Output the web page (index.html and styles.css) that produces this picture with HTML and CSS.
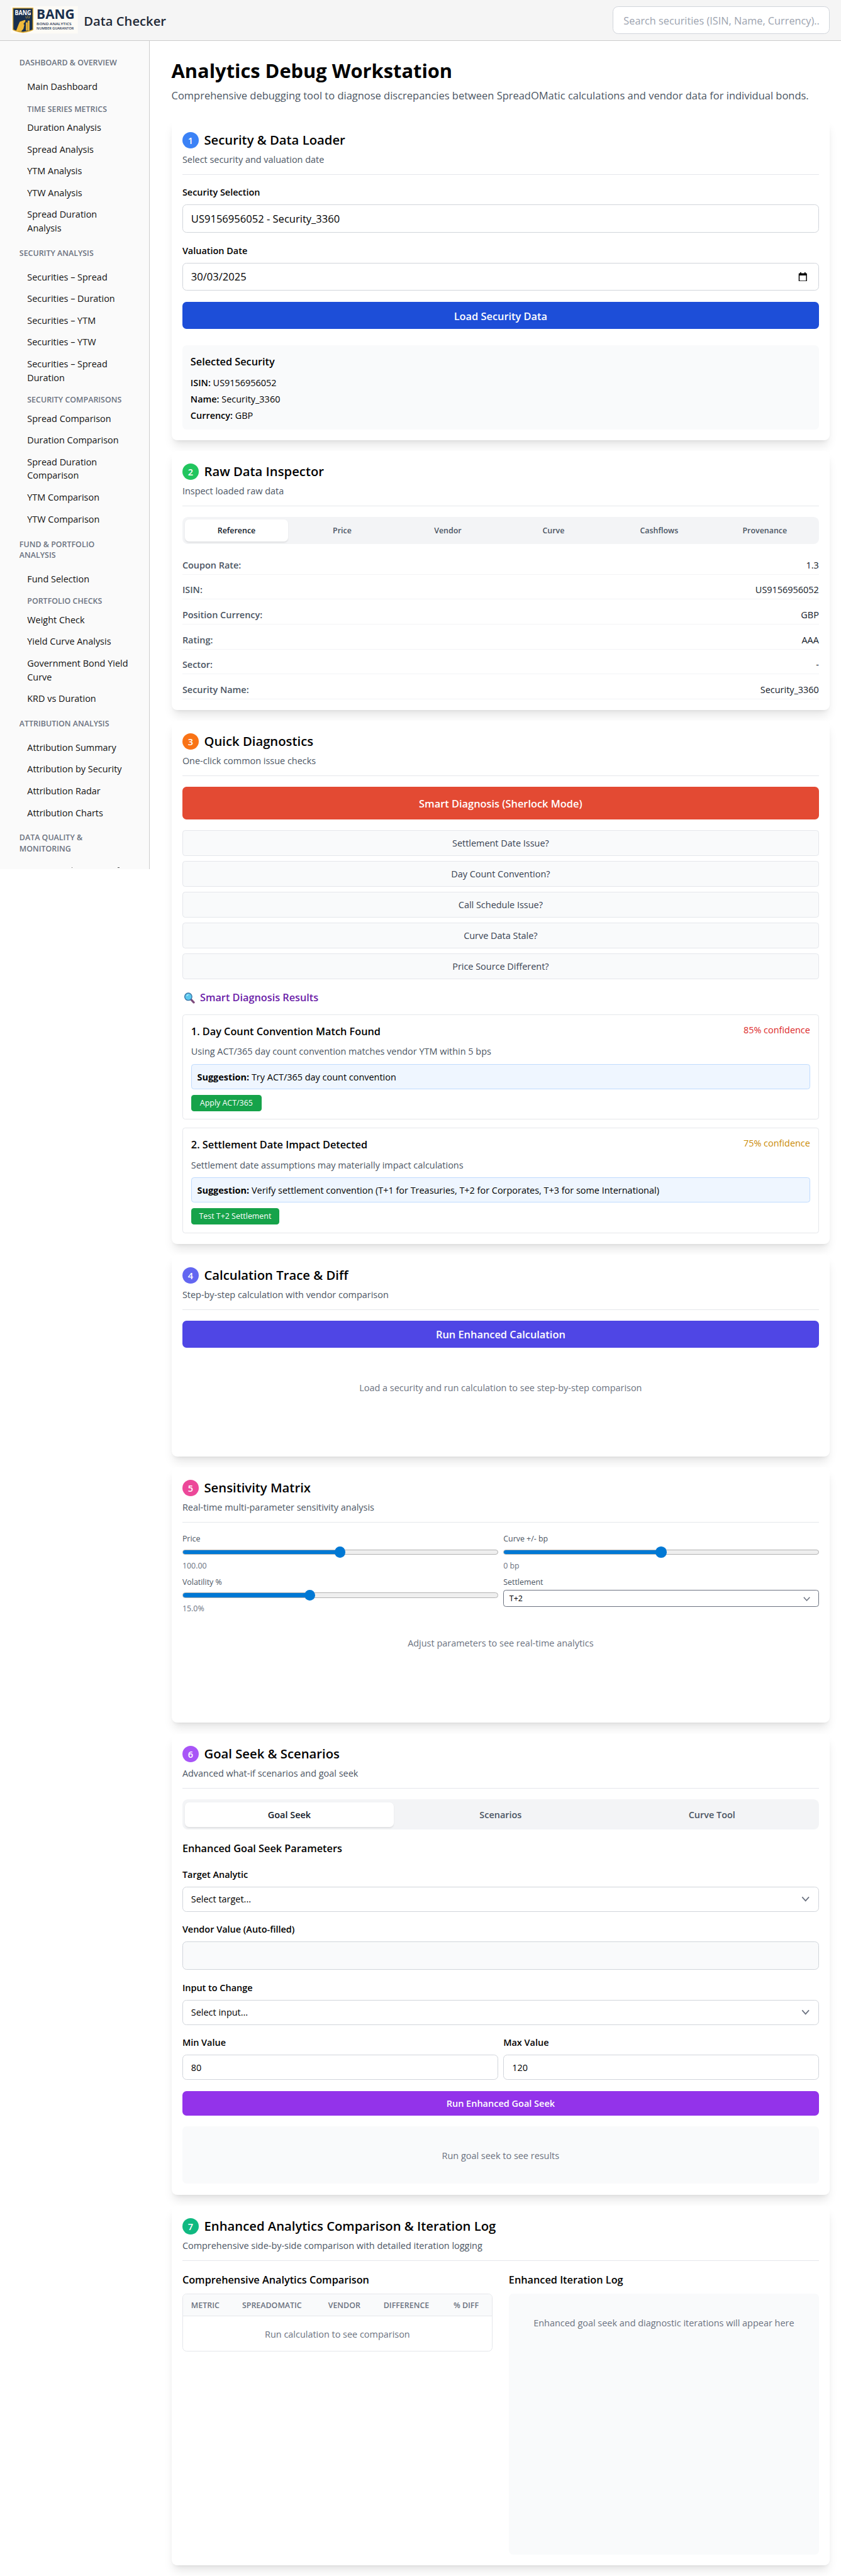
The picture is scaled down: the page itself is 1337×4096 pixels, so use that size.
FILE: index.html
```html
<!DOCTYPE html>
<html lang="en">
<head>
<meta charset="utf-8">
<title>Data Checker</title>
<link rel="stylesheet" href="styles.css">
</head>
<body>
<header class="topbar">
  <div class="brand">
    <svg class="logo" viewBox="0 0 148 60">
      <rect width="148" height="60" fill="#fdfbf6"/>
      <path d="M4 3H50V52Q46 56 27 58.500Q8 56 4 52Z" fill="#e3ae33"/>
      <path d="M6 5H48V51Q44 54 27 56Q10 54 6 51Z" fill="#19304f"/>
      <text x="9" y="19.500" class="logo-text" font-size="13.500" fill="#fff" textLength="36" lengthAdjust="spacingAndGlyphs">BANG</text>
      <path d="M12 54L17 41L20 34L31 30Q34 31 31 35L28 39L30 41L28 50L23 55Z" fill="#efb93a"/>
      <path d="M34 36H36.500V53H34ZM38 32H41V53H38ZM33 22L35 27M37.500 20V26M42 22L40 27" fill="#efb93a" stroke="#efb93a" stroke-width="1"/>
      <text x="57" y="28.300" class="logo-text" font-size="28.500" fill="#19304f" textLength="84" lengthAdjust="spacingAndGlyphs">BANG</text>
      <text x="57" y="41" class="logo-small" font-size="8.500" fill="#19304f" textLength="77" lengthAdjust="spacingAndGlyphs">BOND ANALYTICS</text>
      <text x="57" y="51" class="logo-small" font-size="8.500" fill="#19304f" textLength="82" lengthAdjust="spacingAndGlyphs">NUMBER GUARANTOR</text>
    </svg>
    <span class="brand-name">Data Checker</span>
  </div>
  <div class="search">Search securities (ISIN, Name, Currency)..</div>
</header>
<div class="layout">
  <nav class="sidebar">
    <h3>Dashboard &amp; Overview</h3>
    <a>Main Dashboard</a>
    <h4>Time Series Metrics</h4>
    <a>Duration Analysis</a>
    <a>Spread Analysis</a>
    <a>YTM Analysis</a>
    <a>YTW Analysis</a>
    <a>Spread Duration<br>Analysis</a>
    <h3>Security Analysis</h3>
    <a>Securities – Spread</a>
    <a>Securities – Duration</a>
    <a>Securities – YTM</a>
    <a>Securities – YTW</a>
    <a>Securities – Spread<br>Duration</a>
    <h4>Security Comparisons</h4>
    <a>Spread Comparison</a>
    <a>Duration Comparison</a>
    <a>Spread Duration<br>Comparison</a>
    <a>YTM Comparison</a>
    <a>YTW Comparison</a>
    <h3>Fund &amp; Portfolio<br>Analysis</h3>
    <a>Fund Selection</a>
    <h4>Portfolio Checks</h4>
    <a>Weight Check</a>
    <a>Yield Curve Analysis</a>
    <a>Government Bond Yield<br>Curve</a>
    <a>KRD vs Duration</a>
    <h3>Attribution Analysis</h3>
    <a>Attribution Summary</a>
    <a>Attribution by Security</a>
    <a>Attribution Radar</a>
    <a>Attribution Charts</a>
    <h3>Data Quality &amp;<br>Monitoring</h3>
    <div class="scroll-peek"></div>
  </nav>
  <main>
    <h1>Analytics Debug Workstation</h1>
    <p class="lead">Comprehensive debugging tool to diagnose discrepancies between SpreadOMatic calculations and vendor data for individual bonds.</p>

    <section class="card c1">
      <div class="card-head"><h2><i class="blue">1</i>Security &amp; Data Loader</h2><p>Select security and valuation date</p></div>
      <label>Security Selection</label>
      <div class="field large">US9156956052 - Security_3360</div>
      <label>Valuation Date</label>
      <div class="field large date">30/03/2025
        <svg viewBox="0 0 20 20"><path d="M4 0h2.500v2h7V0H16v2h1.500Q19 2 19 3.500v15Q19 20 17.500 20h-15Q1 20 1 18.500v-15Q1 2 2.500 2H4ZM3 7v11h14V7Z" fill="#000" fill-rule="evenodd"/></svg>
      </div>
      <div class="btn btn-load">Load Security Data</div>
      <div class="summary">
        <h5>Selected Security</h5>
        <p><b>ISIN:</b> US9156956052</p>
        <p><b>Name:</b> Security_3360</p>
        <p><b>Currency:</b> GBP</p>
      </div>
    </section>

    <section class="card c2">
      <div class="card-head"><h2><i class="green">2</i>Raw Data Inspector</h2><p>Inspect loaded raw data</p></div>
      <div class="tabs small"><span class="on">Reference</span><span>Price</span><span>Vendor</span><span>Curve</span><span>Cashflows</span><span>Provenance</span></div>
      <div class="rows">
        <div><b>Coupon Rate:</b><span>1.3</span></div>
        <div><b>ISIN:</b><span>US9156956052</span></div>
        <div><b>Position Currency:</b><span>GBP</span></div>
        <div><b>Rating:</b><span>AAA</span></div>
        <div><b>Sector:</b><span>-</span></div>
        <div><b>Security Name:</b><span>Security_3360</span></div>
      </div>
    </section>

    <section class="card c3">
      <div class="card-head"><h2><i class="orange">3</i>Quick Diagnostics</h2><p>One-click common issue checks</p></div>
      <div class="btn btn-smart">Smart Diagnosis (Sherlock Mode)</div>
      <div class="checks">
        <div>Settlement Date Issue?</div>
        <div>Day Count Convention?</div>
        <div>Call Schedule Issue?</div>
        <div>Curve Data Stale?</div>
        <div>Price Source Different?</div>
      </div>
      <h5 class="results-title">
        <svg viewBox="0 0 24 24"><path d="M15 15L21.500 22" stroke="#7d4b7c" stroke-width="4.500" stroke-linecap="round"/><circle cx="9.500" cy="9.500" r="8" fill="#5cc8ee" stroke="#3b76a8" stroke-width="2"/><path d="M6 8Q7 5 10 5" stroke="#c3efff" stroke-width="1.500" fill="none"/></svg>
        Smart Diagnosis Results</h5>
      <article class="result">
        <div class="result-top"><h5>1. Day Count Convention Match Found</h5><span class="high">85% confidence</span></div>
        <p>Using ACT/365 day count convention matches vendor YTM within 5 bps</p>
        <div class="tip"><strong>Suggestion:</strong> Try ACT/365 day count convention</div>
        <span class="apply apply-a">Apply ACT/365</span>
      </article>
      <article class="result">
        <div class="result-top"><h5>2. Settlement Date Impact Detected</h5><span class="mid">75% confidence</span></div>
        <p>Settlement date assumptions may materially impact calculations</p>
        <div class="tip"><strong>Suggestion:</strong> Verify settlement convention (T+1 for Treasuries, T+2 for Corporates, T+3 for some International)</div>
        <span class="apply apply-b">Test T+2 Settlement</span>
      </article>
    </section>

    <section class="card c4">
      <div class="card-head"><h2><i class="indigo">4</i>Calculation Trace &amp; Diff</h2><p>Step-by-step calculation with vendor comparison</p></div>
      <div class="btn btn-calc">Run Enhanced Calculation</div>
      <p class="empty trace-empty">Load a security and run calculation to see step-by-step comparison</p>
    </section>

    <section class="card c5">
      <div class="card-head"><h2><i class="pink">5</i>Sensitivity Matrix</h2><p>Real-time multi-parameter sensitivity analysis</p></div>
      <div class="params">
        <div><small>Price</small><div class="slider"><div class="track"><div class="fill" style="width:50%"></div></div></div><small class="val">100.00</small></div>
        <div><small>Curve +/- bp</small><div class="slider"><div class="track"><div class="fill" style="width:50%"></div></div></div><small class="val">0 bp</small></div>
        <div><small>Volatility %</small><div class="slider"><div class="track"><div class="fill" style="width:40.300%"></div></div></div><small class="val">15.0%</small></div>
        <div><small>Settlement</small><div class="mini-select">T+2<svg viewBox="0 0 16 16"><path d="M3 5l5 5.500L13 5" fill="none" stroke="#6b7280" stroke-width="1.600"/></svg></div></div>
      </div>
      <p class="empty adjust-empty">Adjust parameters to see real-time analytics</p>
    </section>

    <section class="card c6">
      <div class="card-head"><h2><i class="purple">6</i>Goal Seek &amp; Scenarios</h2><p>Advanced what-if scenarios and goal seek</p></div>
      <div class="tabs"><span class="on">Goal Seek</span><span>Scenarios</span><span>Curve Tool</span></div>
      <h5 class="params-title">Enhanced Goal Seek Parameters</h5>
      <label>Target Analytic</label>
      <div class="field select">Select target...<svg viewBox="0 0 16 16"><path d="M3 5l5 5.500L13 5" fill="none" stroke="#6b7280" stroke-width="1.600"/></svg></div>
      <label>Vendor Value (Auto-filled)</label>
      <div class="field large readonly"></div>
      <label>Input to Change</label>
      <div class="field select">Select input...<svg viewBox="0 0 16 16"><path d="M3 5l5 5.500L13 5" fill="none" stroke="#6b7280" stroke-width="1.600"/></svg></div>
      <div class="two">
        <div><label>Min Value</label><div class="field">80</div></div>
        <div><label>Max Value</label><div class="field">120</div></div>
      </div>
      <div class="btn btn-goal">Run Enhanced Goal Seek</div>
      <div class="goal-results">Run goal seek to see results</div>
    </section>

    <section class="card c7">
      <div class="card-head"><h2><i class="emerald">7</i>Enhanced Analytics Comparison &amp; Iteration Log</h2><p>Comprehensive side-by-side comparison with detailed iteration logging</p></div>
      <div class="compare">
        <div>
          <h5>Comprehensive Analytics Comparison</h5>
          <div class="table">
            <div class="thead"><span>Metric</span><span>SpreadOMatic</span><span>Vendor</span><span>Difference</span><span>% Diff</span></div>
            <div class="tbody">Run calculation to see comparison</div>
          </div>
        </div>
        <div>
          <h5>Enhanced Iteration Log</h5>
          <div class="log">Enhanced goal seek and diagnostic iterations will appear here</div>
        </div>
      </div>
    </section>
  </main>
</div>
</body>
</html>
```
FILE: styles.css
```css
/* 1rem is ten design units */
html { font-size: 10.8172px; }
* { box-sizing: border-box; margin: 0; padding: 0; }
body {
  font-family: "Open Sans", "Noto Sans", sans-serif;
  font-size: 1.335rem;
  line-height: 2rem;
  color: #000;
  background: #fff;
}
h1, h2, h3, h4, h5, b, label { font-weight: 600; }

.topbar {
  height: 6rem;
  background: #f5f5f5;
  border-bottom: 1px solid #ccc;
  display: flex;
  justify-content: space-between;
  align-items: center;
  padding: 0 1.7rem 0 1.6rem;
}
.brand { display: flex; align-items: center; gap: .85rem; }
.logo { width: 9.87rem; height: 4rem; display: block; overflow: visible; }
.logo-text { font-weight: 700; font-family: "Open Sans", sans-serif; }
.logo-small { font-weight: 600; font-family: "Open Sans", sans-serif; }
.brand-name { font-size: 1.87rem; font-weight: 600; line-height: 3rem; padding-top: .2rem; color: #1f2937; }
.search {
  width: 31.9rem;
  height: 4.1rem;
  border: 1px solid #d1d5db;
  border-radius: .8rem;
  background: #fff;
  color: #9ca3af;
  font-size: 1.505rem;
  line-height: 4.1rem;
  padding-left: 1.55rem;
  white-space: nowrap;
}

.layout { display: flex; align-items: flex-start; }
.sidebar {
  width: 22rem;
  height: 121.8rem;
  flex: none;
  background: #fafafa;
  border-right: 1px solid #ccc;
  padding-top: 1.1rem;
  overflow: hidden;
}
.sidebar h3 {
  font-size: 1.15rem;
  line-height: 1.6rem;
  text-transform: uppercase;
  color: #6b7280;
  margin: 1.33rem 0 1.05rem;
  padding-left: 2.85rem;
}
.sidebar h4 {
  font-size: 1.15rem;
  line-height: 1.6rem;
  text-transform: uppercase;
  color: #6b7280;
  margin: .94rem 0 .28rem;
  padding-left: 4rem;
}
.sidebar a { display: block; padding: .65rem 0 .55rem 4rem; color: #111; }
.scroll-peek {
  height: 1px;
  margin-top: 1.9rem;
  background: linear-gradient(#555, #555) 10.5rem 0 / 1px 1px no-repeat, linear-gradient(#555, #555) 17.3rem 0 / 3px 1px no-repeat;
}

main { flex: 1; min-width: 0; padding: 2.4rem 1.65rem 1.6rem 3.2rem; }
h1 { font-size: 2.85rem; font-weight: 700; line-height: 3.9rem; }
.lead { font-size: 1.524rem; line-height: 2.8rem; height: 5.3rem; padding-top: .38rem; color: #4b5563; white-space: nowrap; }
.card {
  background: #fff;
  border-radius: .8rem;
  padding: 1.6rem;
  margin-bottom: 1.6rem;
  box-shadow: 0 1rem 1.5rem -.3rem rgba(0,0,0,.1), 0 .4rem .6rem -.4rem rgba(0,0,0,.1);
  position: relative;
}
.c1 { height: 47.13rem; }
.c2 { height: 38.05rem; }
.c3 { height: 76.87rem; }
.c4 { height: 29.67rem; }
.c5 { height: 37.53rem; }
.c6 { height: 67.8rem; }
.c7 { height: 52.87rem; margin-bottom: 0; }
.card-head { height: 6.48rem; border-bottom: 1px solid #e5e7eb; margin-bottom: 1.6rem; }
h2 { display: flex; align-items: center; gap: .8rem; font-size: 1.875rem; height: 2.8rem; line-height: 2.9rem; }
h2 i {
  width: 2.4rem;
  height: 2.4rem;
  border-radius: 50%;
  color: #fff;
  font: 600 1.34rem/2.5rem "Open Sans", sans-serif;
  text-align: center;
}
.blue { background: #3b82f6; }
.green { background: #22c55e; }
.orange { background: #f97316; }
.indigo { background: #6366f1; }
.pink { background: #ec4899; }
.purple { background: #a855f7; }
.emerald { background: #10b981; }
.card-head p { margin-top: .45rem; color: #4b5563; }
h5 { font-size: 1.505rem; line-height: 2.5rem; height: 2.4rem; }

label { display: block; height: 2rem; line-height: 2.1rem; margin-bottom: .8rem; }
.field {
  height: 3.7rem;
  line-height: 3.7rem;
  border: 1px solid #d1d5db;
  border-radius: .6rem;
  padding: 0 1.2rem;
  margin-bottom: 1.6rem;
}
.field.large { height: 4.1rem; line-height: 4.1rem; font-size: 1.53rem; margin-bottom: 1.65rem; }
.date, .select, .mini-select { display: flex; justify-content: space-between; align-items: center; }
.date svg { width: 1.35rem; height: 1.35rem; margin-right: .4rem; }
.select svg { width: 1.6rem; height: 1.6rem; margin-right: -.1rem; }
.readonly { background: #f9fafb; }
.btn { color: #fff; font-weight: 600; text-align: center; border-radius: .6rem; font-size: 1.515rem; }
.btn-load { background: #1d4ed8; height: 4rem; line-height: 4.2rem; margin-bottom: 2.4rem; }
.summary { height: 12.4rem; background: #f9fafb; border-radius: .6rem; padding: 1.2rem; }
.summary h5 { margin-bottom: .8rem; }
.summary p { height: 2rem; line-height: 2.15rem; margin-bottom: .4rem; }

.tabs { height: 4.4rem; background: #f3f4f6; border-radius: .8rem; padding: .4rem; display: flex; gap: .4rem; margin-bottom: 1.6rem; }
.tabs span { flex: 1 1 0; text-align: center; color: #4b5563; font-weight: 600; line-height: 3.7rem; }
.tabs .on { background: #fff; color: #111827; border-radius: .6rem; box-shadow: 0 .1rem .2rem rgba(0,0,0,.08); }
.tabs.small { height: 4rem; font-size: 1.15rem; }
.tabs.small span { line-height: 3.3rem; }
.rows div { display: flex; justify-content: space-between; height: 2.867rem; padding-top: .45rem; margin-bottom: .8rem; border-bottom: 1px solid #f3f4f6; color: #111827; }
.rows b { color: #4b5563; }

.btn-smart { background: #e34a33; height: 4.83rem; line-height: 4.9rem; margin-bottom: 1.57rem; }
.checks { display: flex; flex-direction: column; gap: .8rem; margin-bottom: 1.6rem; }
.checks div { height: 3.733rem; line-height: 3.7rem; text-align: center; color: #374151; background: #f9fafb; border: 1px solid #e5e7eb; border-radius: .4rem; }
.results-title { color: #6b21a8; display: flex; align-items: center; gap: .7rem; margin-bottom: 1.2rem; }
.results-title svg { width: 1.7rem; height: 1.6rem; margin-left: .2rem; }
.result { height: 15.47rem; border: 1px solid #e5e7eb; border-radius: .4rem; padding: 1.2rem; margin-bottom: 1.2rem; }
.result-top { display: flex; justify-content: space-between; height: 2.4rem; margin-bottom: .8rem; }
.result-top span { line-height: 2.1rem; }
.high { color: #dc2626; }
.mid { color: #ca8a04; }
.result p { color: #4b5563; height: 2rem; line-height: 2.1rem; margin-bottom: .8rem; }
.tip { height: 3.73rem; line-height: 3.7rem; background: #eff6ff; border: 1px solid #bfdbfe; border-radius: .4rem; padding-left: .8rem; margin-bottom: .8rem; }
.apply { display: block; height: 2.4rem; line-height: 2.4rem; background: #16a34a; color: #fff; border-radius: .4rem; text-align: center; font-size: 1.15rem; }
.apply-a { width: 10.36rem; }
.apply-b { width: 12.96rem; }

.btn-calc { background: #4f46e5; height: 4rem; line-height: 4.1rem; }
.empty { text-align: center; color: #6b7280; }
.trace-empty { padding-top: 4.85rem; }

.params { display: grid; grid-template-columns: 1fr 1fr; gap: .8rem; }
small { display: block; font-size: 1.15rem; line-height: 1.65rem; height: 1.6rem; color: #4b5563; }
.val { color: #6b7280; }
.slider { height: 2.35rem; display: flex; align-items: center; }
.track { flex: 1; height: .8rem; background: #efefef; border: 1px solid #b2b2b2; border-radius: .4rem; }
.fill { height: 100%; background: #0078d4; border-radius: .4rem; position: relative; }
.fill::after { content: ""; position: absolute; right: -.8rem; top: 50%; margin-top: -.8rem; width: 1.6rem; height: 1.6rem; border-radius: 50%; background: #0078d4; }
.mini-select { margin-top: .37rem; height: 2.5rem; border: 1px solid #6b7280; border-radius: .4rem; font-size: 1.15rem; padding: .1rem .95rem 0 .8rem; }
.mini-select svg { width: 1.4rem; height: 1.4rem; }
.adjust-empty { padding-top: 3.25rem; }

.params-title { margin-bottom: 1.6rem; }
.two { display: grid; grid-template-columns: 1fr 1fr; gap: .8rem; }
.btn-goal { background: #9333ea; height: 3.6rem; line-height: 3.75rem; font-size: 1.34rem; margin-bottom: 1.6rem; }
.goal-results { height: 8.4rem; line-height: 8.7rem; text-align: center; color: #6b7280; background: #f9fafb; border-radius: .6rem; }

.compare { display: grid; grid-template-columns: 1fr 1fr; gap: 2.4rem; }
.compare h5 { margin-bottom: .8rem; }
.table { height: 8.57rem; border: 1px solid #e5e7eb; border-radius: .6rem; overflow: hidden; }
.thead { display: grid; grid-template-columns: 7.5rem 12.64rem 8.14rem 10.28rem 1fr; height: 3.3rem; line-height: 3.3rem; padding-left: 1.2rem; background: #f9fafb; border-bottom: 1px solid #e5e7eb; font-size: 1.15rem; font-weight: 600; text-transform: uppercase; color: #6b7280; }
.tbody { line-height: 5.3rem; text-align: center; color: #6b7280; }
.log { height: 38.4rem; padding-top: 3.35rem; text-align: center; color: #6b7280; background: #f9fafb; border-radius: .6rem; }
```
